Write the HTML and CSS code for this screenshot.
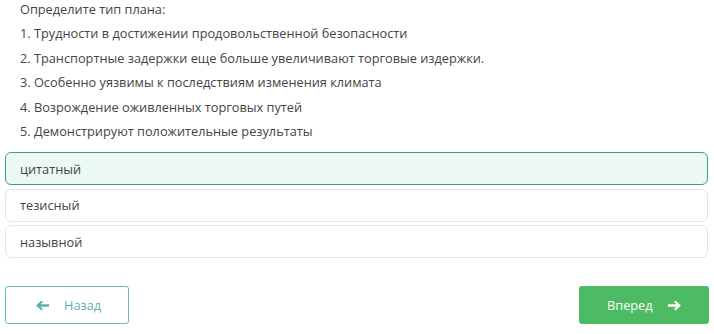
FILE: index.html
```
<!DOCTYPE html>
<html lang="ru">
<head>
<meta charset="utf-8">
<link rel="stylesheet" href="styles.css">
</head>
<body>
<div class="page">
  <div class="question">
    <p>Определите тип плана:</p>
    <p>1. Трудности в достижении продовольственной безопасности</p>
    <p>2. Транспортные задержки еще больше увеличивают торговые издержки.</p>
    <p>3. Особенно уязвимы к последствиям изменения климата</p>
    <p>4. Возрождение оживленных торговых путей</p>
    <p>5. Демонстрируют положительные результаты</p>
  </div>
  <div class="options">
    <div class="option selected">цитатный</div>
    <div class="option">тезисный</div>
    <div class="option">назывной</div>
  </div>
  <div class="nav">
    <button class="btn back">
      <svg width="13" height="11" viewBox="0 0 13 11"><path d="M0 5.5 L5.5 0.5 L7 2 L4.5 4.2 H13 V6.8 H4.5 L7 9 L5.5 10.5 Z" fill="currentColor"/></svg>
      <span>Назад</span>
    </button>
    <button class="btn next">
      <span>Вперед</span>
      <svg width="13" height="11" viewBox="0 0 13 11"><path d="M13 5.5 L7.5 0.5 L6 2 L8.5 4.2 H0 V6.8 H8.5 L6 9 L7.5 10.5 Z" fill="currentColor"/></svg>
    </button>
  </div>
</div>
</body>
</html>
```
FILE: styles.css
```
* { box-sizing: border-box; }
html, body { margin: 0; padding: 0; background: #fff; }
body {
  font-family: "Open Sans", "Liberation Sans", sans-serif;
  font-size: 12.75px;
  color: #444;
  overflow: hidden;
}
.page {
  width: 714px;
  height: 334px;
  padding: 0 5px 0 5px;
}
.question {
  margin-top: -3px;
  padding-left: 15px;
}
.question p {
  margin: 0;
  line-height: 24.4px;
}
.options {
  margin-top: 9px;
  display: flex;
  flex-direction: column;
  gap: 3.5px;
  width: 703px;
}
.option {
  height: 33px;
  border: 1px solid #e5e5e5;
  border-radius: 6px;
  padding-left: 14px;
  display: flex;
  align-items: center;
  color: #444;
}
.option.selected {
  background: #ebf9f2;
  border-color: #3f9c8c;
}
.nav {
  margin-top: 28px;
  display: flex;
  justify-content: space-between;
  width: 704px;
}
.btn {
  height: 38px;
  border-radius: 3px;
  font-family: inherit;
  font-size: 12.75px;
  display: flex;
  align-items: center;
  padding: 0;
  cursor: pointer;
}
.btn.back {
  width: 124px;
  background: #fff;
  border: 1px solid #69bcb8;
  color: #5cb3b0;
  padding-left: 30px;
  gap: 15px;
}
.btn.next {
  width: 130px;
  background: #4cbb64;
  border: none;
  color: #fff;
  padding-left: 28px;
  gap: 15px;
}
```
